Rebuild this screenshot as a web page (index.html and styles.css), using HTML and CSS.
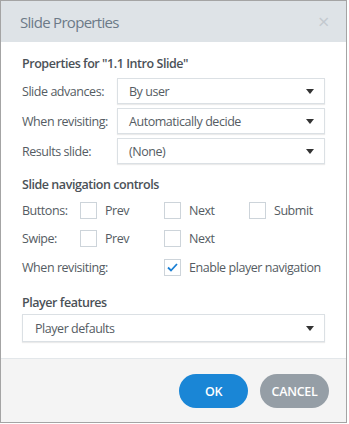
FILE: index.html
```html
<!DOCTYPE html>
<html lang="en">

<head>
    <meta charset="UTF-8">
    <meta name="viewport" content="width=device-width, initial-scale=1.0">
    <title>Slide Properties</title>
    <link rel="stylesheet" href="styles.css">
</head>

<body>
    <div class="dialog">
        <div class="dialog-header">
            <h1>Slide Properties</h1>
            <span class="close">&times;</span>
        </div>

        <div class="dialog-body">
            <h2>Properties for "1.1 Intro Slide"</h2>
            <div class="field-grid">
                <label>Slide advances:</label>
                <div class="select"><span>By user</span><i class="caret"></i></div>
                <label>When revisiting:</label>
                <div class="select"><span>Automatically decide</span><i class="caret"></i></div>
                <label>Results slide:</label>
                <div class="select"><span>(None)</span><i class="caret"></i></div>
            </div>

            <h2 class="section">Slide navigation controls</h2>
            <div class="check-grid">
                <span class="row-label">Buttons:</span>
                <label class="check"><span class="box"></span>Prev</label>
                <label class="check"><span class="box"></span>Next</label>
                <label class="check"><span class="box"></span>Submit</label>

                <span class="row-label">Swipe:</span>
                <label class="check"><span class="box"></span>Prev</label>
                <label class="check"><span class="box"></span>Next</label>
                <span></span>

                <span class="row-label wide">When revisiting:</span>
                <label class="check span-2"><span class="box checked">
                    <svg width="11" height="9" viewBox="0 0 11 9"><path d="M1 4.5 L4 7.5 L10 1" fill="none" stroke="#1a7fd4" stroke-width="1.8"/></svg>
                </span>Enable player navigation</label>
            </div>

            <h2 class="section">Player features</h2>
            <div class="select select-full"><span>Player defaults</span><i class="caret"></i></div>
        </div>

        <div class="dialog-footer">
            <button class="btn btn-ok">OK</button>
            <button class="btn btn-cancel">CANCEL</button>
        </div>
    </div>
</body>

</html>
```

FILE: styles.css
```css
body {
    margin: 0;
    padding: 0;
    background-color: #fff;
    font-family: "Open Sans", "Noto Sans", sans-serif;
    font-size: 12.5px;
    letter-spacing: -0.45px;
    color: #555c63;
    white-space: nowrap;
}

.dialog {
    width: 347px;
    height: 423px;
    box-sizing: border-box;
    border: 1px solid #a4a4a4;
    display: flex;
    flex-direction: column;
    background-color: #fff;
}

.dialog-header {
    height: 41px;
    flex-shrink: 0;
    background-color: #dee3e7;
    display: flex;
    align-items: center;
    justify-content: space-between;
    padding: 0 17px 0 19px;
}

.dialog-header h1 {
    margin: 0;
    font-size: 15px;
    letter-spacing: -0.7px;
    font-weight: normal;
    color: #6c7a87;
}

.close {
    font-size: 20px;
    color: #c3c9cf;
    line-height: 1;
}

.dialog-body {
    padding: 13px 21px 16px 21px;
}

h2 {
    margin: 0 0 5px;
    font-size: 12.5px;
    font-weight: 600;
    color: #4b5157;
    line-height: 18px;
}

h2.section {
    margin-top: 12px;
    margin-bottom: 2px;
}

.field-grid {
    display: grid;
    grid-template-columns: 95px 1fr;
    row-gap: 4px;
    align-items: center;
}

.select {
    height: 26px;
    box-sizing: border-box;
    border: 1px solid #dbe0e4;
    box-shadow: 0 1px 1px rgba(0, 0, 0, 0.08);
    display: flex;
    align-items: center;
    justify-content: space-between;
    padding: 0 10px 0 11px;
    color: #555c63;
}

.select-full {
    height: 28px;
    margin-top: 2px;
    padding-left: 12px;
}

.caret {
    width: 0;
    height: 0;
    border-left: 4px solid transparent;
    border-right: 4px solid transparent;
    border-top: 5px solid #333;
}

.check-grid {
    display: grid;
    grid-template-columns: 58px 84px 85px 1fr;
    grid-template-rows: 28px 28px 30px;
    align-items: center;
}

.row-label.wide {
    grid-column: span 2;
}

.check {
    display: flex;
    align-items: center;
    gap: 8px;
}

.span-2 {
    grid-column: span 2;
}

.box {
    width: 17px;
    height: 17px;
    box-sizing: border-box;
    border: 1px solid #cdd4da;
    background-color: #fff;
    display: flex;
    align-items: center;
    justify-content: center;
}

.dialog-footer {
    flex: 1;
    background-color: #f4f4f4;
    border-top: 1px solid #e3e7ea;
    display: flex;
    justify-content: flex-end;
    align-items: flex-start;
    gap: 12px;
    padding: 15px 17px 0 0;
}

.btn {
    height: 34px;
    width: 69px;
    border: none;
    border-radius: 17px;
    font-family: "Open Sans", sans-serif;
    font-size: 12.5px;
    letter-spacing: -0.3px;
    font-weight: 600;
    color: #fff;
    cursor: pointer;
}

.btn-ok {
    background-color: #1a86d6;
}

.btn-cancel {
    background-color: #959ea6;
}
```
